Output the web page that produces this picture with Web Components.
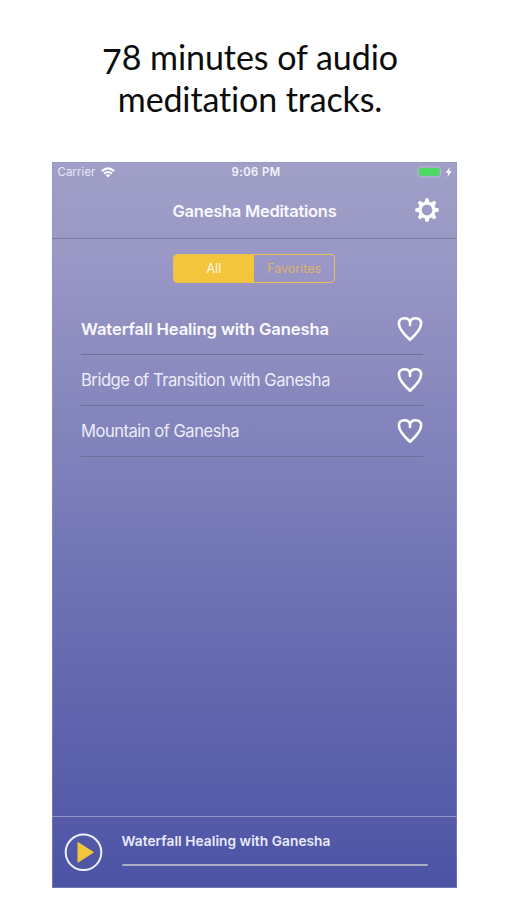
<!DOCTYPE html>
<html lang="en"><head><meta charset="utf-8"><title>Ganesha Meditations</title>
<style>html,body{margin:0;background:#fff}body{width:507px;height:900px;overflow:hidden}</style></head>
<body>
<promo-page></promo-page>
<script>
const define = (name, html, ready) => customElements.define(name, class extends HTMLElement {
  connectedCallback() {
    const root = this.attachShadow({ mode: 'open' });
    root.innerHTML = html;
    if (ready) ready(this, root);
  }
});

// Text whose tracking is adjusted so the line has the requested width.
define('fit-text', `<style>:host{display:inline-block;white-space:nowrap}span{display:inline-block;white-space:nowrap}</style><span><slot></slot></span>`, (el, root) => {
  const span = root.querySelector('span'), target = +el.getAttribute('width');
  const natural = span.getBoundingClientRect().width, n = el.textContent.length;
  span.style.letterSpacing = (target - natural) / n + 'px';
});

define('promo-title', `<style>
:host{display:flex;flex-direction:column;align-items:center;box-sizing:border-box;height:162px;padding:36px 7px 0 0;font:34px/42px Lato,sans-serif;color:#0c0c0c}
.old{position:relative;top:4px}</style>
<fit-text width="296"><span class="old">7</span>8 minutes of audio</fit-text>
<fit-text width="265">meditation tracks.</fit-text>`);

define('status-bar', `<style>
:host{display:grid;grid-template-columns:1fr auto 1fr;align-items:center;height:20px;padding:0 4px 0 6px;font-size:11.3px;color:#f3f3fc}
.l,.r{display:flex;align-items:center}.l{gap:5px;color:#e9e9f7}.r{justify-content:flex-end}b{font-weight:600;padding-left:2px}svg{display:block}</style>
<div class="l"><fit-text width="38">Carrier</fit-text>
<svg width="14" height="11" viewBox="0 0 14 11" fill="none" stroke="#fff" stroke-width="2"><path d="M.7 4.2Q7-1.4 13.3 4.2"/><path d="M3 6.8Q7 3.3 11 6.8"/><path d="M7 10.6 4.7 8.2Q7 6.5 9.3 8.2Z" fill="#fff" stroke="none"/></svg></div>
<b><fit-text width="49">9:06 PM</fit-text></b>
<div class="r"><svg width="36" height="12" viewBox="0 0 36 12"><rect x=".9" y=".9" width="22.5" height="10" rx="2.5" fill="none" stroke="#b9bfd2" stroke-width=".9"/><rect x="2" y="2" width="20.4" height="7.8" rx="1.2" fill="#4cd964"/><path d="M24.6 4.2Q26.2 5.9 24.6 7.6Z" fill="#b9bfd2"/><path d="M32.9.9 28.8 6.7H31.3L30.4 11 34.8 5.1H32.1Z" fill="#fff"/></svg></div>`);

define('nav-bar', `<style>
:host{display:grid;grid-template-columns:1fr auto 1fr;align-items:center;height:57px;padding:0 17.5px;border-bottom:1px solid #7c7ba3;box-sizing:border-box;font-size:16.5px;font-weight:600;color:#f9f9ff}
h1{grid-column:2;margin:0;padding:1px 0 0 1px;font:inherit}.g{justify-self:end}svg{display:block}</style>
<h1><fit-text width="164">Ganesha Meditations</fit-text></h1>
<svg class="g" width="24" height="24" viewBox="-12 -12 24 24"><g fill="#fff" id="teeth"></g><circle r="7" fill="none" stroke="#fff" stroke-width="3.2"/></svg>`, (el, root) => {
  root.querySelector('#teeth').innerHTML = [0,45,90,135,180,225,270,315].map(a =>
    `<path transform="rotate(${a})" d="M-2.5 -7.5-1.7-11Q-1.6-11.7-.9-11.7H.9Q1.6-11.7 1.7-11L2.5-7.5Z"/>`).join('');
});

define('segment-control', `<style>
:host{display:flex;width:162.5px;height:29px;box-sizing:border-box;margin:15px auto 0;border:1px solid #edc052;border-radius:4px;overflow:hidden;font-size:12.5px}
div{flex:1;display:flex;align-items:center;justify-content:center;color:#dfb468}
.on{background:#f2c53d;color:#fff9e6}</style><div class="on"><fit-text width="15">All</fit-text></div><div><fit-text width="54">Favorites</fit-text></div>`);

define('heart-icon', `<style>:host,svg{display:block}</style><svg width="26" height="26" viewBox="0 0 26 26" fill="none" stroke="#fff" stroke-width="2.6" stroke-linejoin="round" stroke-linecap="round"><path d="M13 6.6C12.4 3.3 10.2 2.2 7.4 2.2 3.9 2.2 1.9 4.2 1.9 7.4 1.9 12.8 8 19.2 13 23.8 18 19.2 24.1 12.8 24.1 7.4 24.1 4.2 22.1 2.2 18.6 2.2 15.8 2.2 13.6 3.3 13 6.6V9"/></svg>`);

define('track-row', `<style>
:host{display:flex;align-items:center;justify-content:space-between;height:51px;box-sizing:border-box;padding-top:1px;border-bottom:1px solid #6d7099;font-size:16.6px;color:#ededfa}
:host([current]){font-weight:600;color:#fafaff}</style><slot></slot><heart-icon></heart-icon>`);

define('player-bar', `<style>
:host{display:flex;height:72px;box-sizing:border-box;border-top:1px solid #9297c7;padding:0 29px 0 12px}
.play{display:block;margin:16px 19px 0 0;flex:none}
.info{flex:1;font-size:13.7px;line-height:20px;font-weight:600;color:#e9eafa;padding-top:14px}
.bar{height:2px;background:#aaadc4;margin-top:13px;border-radius:1px}fit-text{display:block}</style>
<svg class="play" width="39" height="39" viewBox="0 0 39 39"><circle cx="19.5" cy="19.3" r="17.8" fill="none" stroke="#eff0ff" stroke-width="2"/><path d="M13.5 8.7V30L30.2 19.3Z" fill="#f2c53d"/></svg>
<div class="info"><fit-text width="209">Waterfall Healing with Ganesha</fit-text><div class="bar"></div></div>`);

define('phone-screen', `<style>
:host{display:flex;flex-direction:column;width:405px;height:726px;margin-left:51.5px;font-family:Inter,"Liberation Sans",sans-serif;background:linear-gradient(#a09fc7 0%,#9998c6 13%,#8f8ec0 24%,#7e81ba 41%,#676bb0 67%,#555ba8 90%,#4b53a5 100%);box-shadow:inset 0 0 0 1px #8d91c080}
.list{padding:20.5px 34px 0 29.5px;flex:1}</style>
<status-bar></status-bar><nav-bar></nav-bar><segment-control></segment-control>
<div class="list"><track-row current><fit-text width="248">Waterfall Healing with Ganesha</fit-text></track-row><track-row><fit-text width="249">Bridge of Transition with Ganesha</fit-text></track-row><track-row><fit-text width="158">Mountain of Ganesha</fit-text></track-row></div>
<player-bar></player-bar>`);

define('promo-page', `<style>:host{display:block;height:900px}</style><promo-title></promo-title><phone-screen></phone-screen>`);
</script>
</body></html>
